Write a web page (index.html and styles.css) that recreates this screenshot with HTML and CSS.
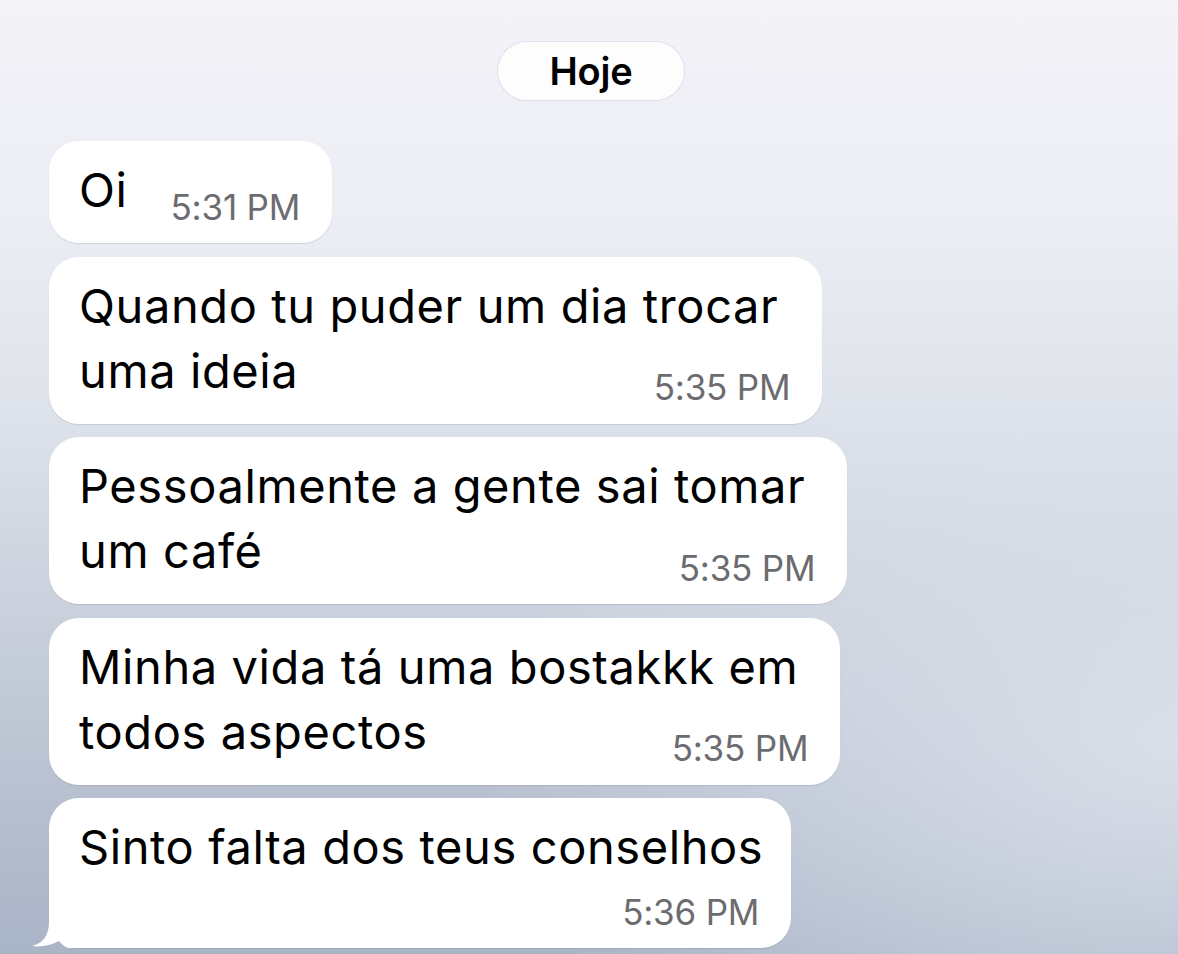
FILE: index.html
```html
<!DOCTYPE html>
<html lang="pt">
<head>
<meta charset="utf-8">
<title>Conversa</title>
<link rel="stylesheet" href="styles.css">
</head>
<body>
<div class="screen">
  <div class="date-row"><span class="date-pill">Hoje</span></div>
  <div class="messages">
    <div class="bubble">
      <div class="last-row short-row"><span class="line">Oi</span><span class="time">5:31 PM</span></div>
    </div>
    <div class="bubble">
      <div class="line">Quando tu puder um dia trocar</div>
      <div class="last-row"><span class="line">uma ideia</span><span class="time">5:35 PM</span></div>
    </div>
    <div class="bubble">
      <div class="line line-tight">Pessoalmente a gente sai tomar</div>
      <div class="last-row"><span class="line">um café</span><span class="time">5:35 PM</span></div>
    </div>
    <div class="bubble">
      <div class="line line-tight">Minha vida tá uma bostakkk em</div>
      <div class="last-row"><span class="line">todos aspectos</span><span class="time">5:35 PM</span></div>
    </div>
    <div class="bubble bubble-tail">
      <div class="line line-full">Sinto falta dos teus conselhos</div>
      <div class="time-row"><span class="time">5:36 PM</span></div>
      <svg class="tail" width="47" height="32" viewBox="0 0 47 32" aria-hidden="true">
        <path d="M17 0 L17 6 C17 18 12 27 0 30 C9 31.5 19 29 27 25 C29.5 28 32 30.5 36 32 L47 32 L47 0 Z" fill="#ffffff"/>
      </svg>
    </div>
  </div>
</div>
</body>
</html>
```
FILE: styles.css
```css
html, body {
  margin: 0;
  padding: 0;
  height: 100%;
}

body {
  font-family: Inter, "Liberation Sans", sans-serif;
  color: #000;
  overflow: hidden;
  background:
    radial-gradient(ellipse 60% 45% at 100% 78%, rgba(222, 228, 237, 0.85), rgba(222, 228, 237, 0) 100%),
    linear-gradient(180deg, #f3f3f8 0%, #eceef4 22%, #dfe3eb 42%, #c9d0dc 65%, #b6bfcf 85%, #a9b4c7 100%);
}

.screen {
  min-height: 954px;
  display: flex;
  flex-direction: column;
  padding-top: 42px;
  box-sizing: border-box;
}

.date-row {
  display: flex;
  justify-content: center;
  margin-bottom: 41px;
  padding-left: 4px;
}

.date-pill {
  display: inline-block;
  height: 58px;
  line-height: 58px;
  padding: 0 51px;
  border-radius: 29px;
  background: rgba(255, 255, 255, 0.85);
  box-shadow: 0 0 0 1px rgba(200, 206, 218, 0.5);
  font-size: 38px;
  font-weight: 600;
  letter-spacing: -0.2px;
  box-sizing: border-box;
}

.messages {
  display: flex;
  flex-direction: column;
  align-items: flex-start;
  gap: 13.5px;
  padding-left: 49px;
}

.bubble {
  position: relative;
  background: #ffffff;
  border-radius: 30px;
  padding: 16px 32px 21px 30px;
  font-size: 47px;
  line-height: 65px;
  box-shadow: 0 1px 1px rgba(90, 100, 125, 0.18);
}

.line {
  white-space: nowrap;
  letter-spacing: 0.6px;
}

div.line {
  padding-right: 12px;
}

div.line-tight {
  padding-right: 10px;
}

div.line-full {
  padding-right: 0;
  margin-right: -4px;
}

.last-row {
  display: flex;
  justify-content: space-between;
  align-items: flex-end;
  gap: 39px;
}

.short-row {
  gap: 43px;
}

.time {
  font-size: 35px;
  line-height: 35px;
  color: #6c6c70;
  white-space: nowrap;
  margin-bottom: -2.8px;
  letter-spacing: -0.2px;
}

.time-row {
  display: flex;
  justify-content: flex-end;
  margin-top: 16px;
}

.bubble-tail {
  border-bottom-left-radius: 30px;
}

.tail {
  position: absolute;
  left: -17px;
  bottom: 0;
  display: block;
}
```
